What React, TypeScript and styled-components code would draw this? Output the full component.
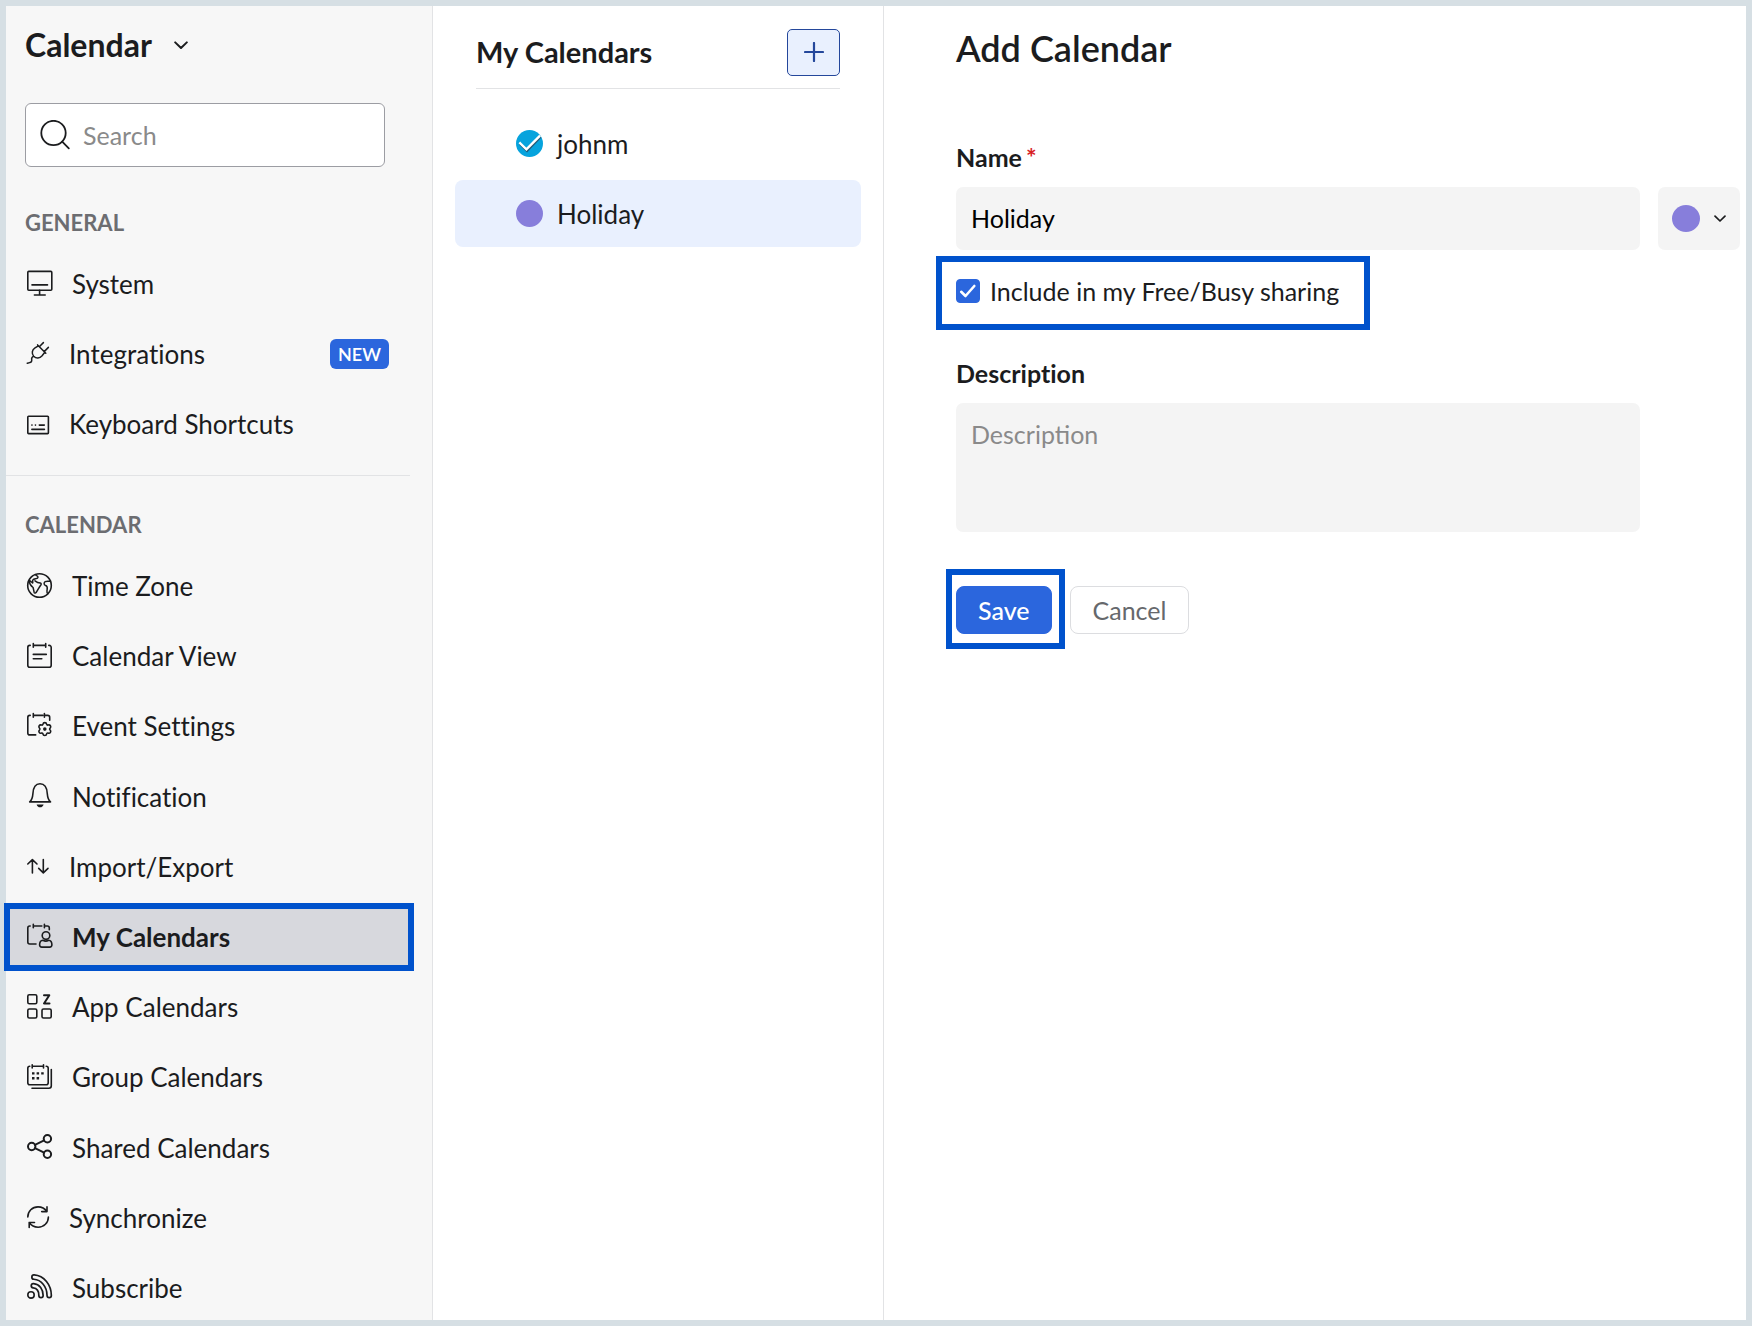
import React, { useState } from "react";
import styled, { createGlobalStyle, css } from "styled-components";

const colors = {
  frame: "#d6dfe4",
  sidebar: "#f7f7f7",
  text: "#1b1c1e",
  muted: "#6c6d71",
  placeholder: "#8a8a8a",
  line: "#e2e3e5",
  field: "#f4f4f4",
  primary: "#2b66dd",
  callout: "#0052cc",
  selected: "#e9f0fe",
  purple: "#877edb",
};

const GlobalStyle = createGlobalStyle`
  *, *::before, *::after { box-sizing: border-box; }
  body {
    margin: 0;
    background: ${colors.frame};
    color: ${colors.text};
    font-family: Lato, "Open Sans", sans-serif;
    font-size: 25px;
    line-height: 30px;
  }
  button, input, textarea { font: inherit; color: inherit; }
  h1, h2, h3, ul { margin: 0; padding: 0; }
  ul { list-style: none; }
`;

/* Frame drawn over an element to call attention to it. */
const callout = (inset: string) => css`
  position: relative;
  &::after {
    content: "";
    position: absolute;
    inset: ${inset};
    border: 6px solid ${colors.callout};
    pointer-events: none;
  }
`;

const Page = styled.div`
  display: grid;
  grid-template-columns: 427px 451px minmax(0, 1fr);
  min-height: 100vh;
  padding: 6px;
`;

const Sidebar = styled.aside`
  display: flex;
  flex-direction: column;
  padding: 18px 0 4px;
  background: ${colors.sidebar};
  border-right: 1px solid ${colors.line};
`;

const AppSwitcher = styled.button`
  display: flex;
  align-items: center;
  align-self: flex-start;
  gap: 22px;
  margin-left: 19px;
  padding: 0;
  border: 0;
  background: none;
  font-size: 32px;
  font-weight: 700;
  line-height: 42px;
`;

const SearchField = styled.label`
  display: flex;
  align-items: center;
  gap: 13px;
  height: 64px;
  margin: 37px 47px 0 19px;
  padding: 0 14px;
  background: #fff;
  border: 1px solid #9c9da3;
  border-radius: 6px;
`;

const SearchInput = styled.input`
  flex: 1;
  min-width: 0;
  padding: 0;
  border: 0;
  outline: 0;
  background: none;
  &::placeholder {
    color: ${colors.placeholder};
    opacity: 1;
  }
`;

const NavSection = styled.section<{ $fill?: boolean }>`
  display: flex;
  flex-direction: column;
  flex: ${(p) => (p.$fill ? "1" : "none")};
  padding-top: ${(p) => (p.$fill ? "36px" : "43px")};
`;

const NavDivider = styled.hr`
  flex: none;
  width: auto;
  height: 1px;
  margin: 23px 22px 0 0;
  border: 0;
  background: ${colors.line};
`;

const NavHeading = styled.h2`
  margin: 0 0 20px 19px;
  color: ${colors.muted};
  font-size: 22px;
  line-height: 26px;
  text-transform: uppercase;
`;

const NavList = styled.ul`
  display: flex;
  flex: 1;
  flex-direction: column;
  justify-content: space-between;
  gap: 14px;
  margin: 0 24px 0 4px;
`;

const NavLink = styled.a<{ $active?: boolean }>`
  display: flex;
  align-items: center;
  gap: 20px;
  height: 56px;
  padding: 0 19px 0 17px;
  color: inherit;
  font-size: 26px;
  text-decoration: none;
  font-variant-ligatures: none;
  ${(p) =>
    p.$active &&
    css`
      background: #d7d8dd;
      font-weight: 700;
      ${callout("-6px")}
    `}
`;

const NavIcon = styled.svg`
  display: block;
  flex: none;
  box-sizing: content-box;
  padding-bottom: 2px;
  overflow: visible;
  fill: none;
  stroke: currentColor;
  stroke-width: 1.6;
  stroke-linecap: round;
  stroke-linejoin: round;
`;

const Badge = styled.span`
  margin-left: auto;
  padding: 0 8px;
  border-radius: 6px;
  background: ${colors.primary};
  color: #fff;
  font-size: 18px;
  font-weight: 600;
`;

const ListPane = styled.section`
  padding: 23px 22px 0;
  background: #fff;
  border-right: 1px solid ${colors.line};
`;

const ListHeader = styled.header`
  display: flex;
  align-items: center;
  justify-content: space-between;
  margin: 0 21px;
  padding-bottom: 12px;
  border-bottom: 1px solid ${colors.line};
`;

const ListTitle = styled.h2`
  padding-bottom: 2px;
  font-size: 29px;
  line-height: 36px;
`;

const AddButton = styled.button`
  display: grid;
  place-items: center;
  width: 53px;
  height: 47px;
  padding: 0 0 2px;
  border: 1px solid #24479b;
  border-radius: 5px;
  background: ${colors.selected};
  color: #24479b;
`;

const CalendarList = styled.ul`
  display: grid;
  gap: 3px;
  margin-top: 21px;
`;

const CalendarRow = styled.li<{ $selected?: boolean }>`
  display: flex;
  align-items: center;
  height: 67px;
  padding-left: 61px;
  border-radius: 8px;
  background: ${(p) => (p.$selected ? colors.selected : "transparent")};
  font-size: 26px;
`;

const CheckLabel = styled.label<{ $gap: number }>`
  display: inline-flex;
  align-items: center;
  gap: ${(p) => p.$gap}px;
`;

const CheckStack = styled.span`
  display: grid;
  place-items: center;
  & > * {
    grid-area: 1 / 1;
  }
  & > svg {
    pointer-events: none;
  }
`;

const RoundCheck = styled.input<{ $color: string }>`
  appearance: none;
  width: 27px;
  height: 27px;
  margin: 0;
  border-radius: 50%;
  background: ${(p) => p.$color};
`;

const SquareCheck = styled.input`
  appearance: none;
  width: 24px;
  height: 24px;
  margin: 0;
  border: 1px solid ${colors.primary};
  border-radius: 4px;
  background: #fff;
  &:checked {
    background: ${colors.primary};
  }
`;

const FormPane = styled.main`
  padding: 20px 6px 0 72px;
  background: #fff;
`;

const FormTitle = styled.h1`
  margin-bottom: 72px;
  font-size: 36px;
  font-weight: 600;
  line-height: 44px;
`;

const FormGrid = styled.form`
  display: grid;
  grid-template-columns: minmax(0, 1fr) 82px;
  column-gap: 18px;
`;

const FullRow = styled.div`
  grid-column: 1 / -1;
`;

const FieldLabel = styled.label`
  display: flex;
  gap: 4px;
  grid-column: 1 / -1;
  margin-bottom: 15px;
  font-weight: 700;
  font-variant-ligatures: none;
`;

const Required = styled.span`
  color: #d8201f;
`;

const TextInput = styled.input`
  width: 100%;
  height: 63px;
  padding: 0 15px 2px;
  border: 0;
  border-radius: 7px;
  outline: 0;
  background: ${colors.field};
  color: #000;
`;

const TextArea = styled.textarea`
  display: block;
  width: 100%;
  height: 129px;
  padding: 16px 15px;
  border: 0;
  border-radius: 7px;
  outline: 0;
  resize: none;
  background: ${colors.field};
  &::placeholder {
    color: ${colors.placeholder};
    opacity: 1;
  }
`;

const ColorButton = styled.button`
  display: flex;
  align-items: center;
  gap: 14px;
  height: 63px;
  padding: 0 14px;
  border: 0;
  border-radius: 7px;
  background: ${colors.field};
`;

const Swatch = styled.span`
  width: 28px;
  height: 27px;
  border-radius: 50%;
  background: ${colors.purple};
`;

const SharingOption = styled.div`
  display: inline-block;
  height: 30px;
  margin: 26px 0 52px;
  ${callout("-20px -31px -24px -20px")}
`;

const Actions = styled.div`
  display: flex;
  gap: 18px;
  grid-column: 1 / -1;
  margin-top: 54px;
`;

const Button = styled.button`
  height: 48px;
  padding: 0 22px;
  border: 1px solid #dcdde0;
  border-radius: 8px;
  background: #fff;
  color: #66686c;
`;

const SaveButton = styled(Button)`
  padding: 0 21px;
  border-color: ${colors.primary};
  background: ${colors.primary};
  color: #fff;
  font-weight: 500;
  ${callout("-18px -14px -16px -11px")}
`;

const Chevron = ({ width }: { width: number }) => (
  <svg
    width={width}
    height={width * 0.6}
    viewBox="0 0 14 8"
    fill="none"
    stroke="currentColor"
    strokeWidth="2"
    strokeLinecap="round"
    strokeLinejoin="round"
    aria-hidden="true"
  >
    <path d="M1.2 1.2 7 6.8l5.8-5.6" />
  </svg>
);

type Glyph = { size: 22 | 25; art: React.ReactNode };

const glyphs: Record<string, Glyph> = {
  system: {
    size: 25,
    art: (
      <>
        <rect x="0.8" y="0.4" width="24" height="18.8" rx="1" />
        <path d="M5 13.900h15.500M12.600 19.200v4.600M7.400 24h10.800" />
      </>
    ),
  },
  plug: {
    size: 22,
    art: (
      <path
        strokeWidth="1.5"
        d="M10.600 2.900l8.200 8.400M16.400.6l-4.100 4.100M21.400 5.400l-4.200 4.200M11.400 3.800 8 5.900c-3.200 2-3.500 5.800-1.300 8.300 2.500 2.700 6 2.400 8.400-.4l2.700-3.500M6.300 14.400c-1.700.9-1.900 1.700-1.600 3.300.3 1.800-.6 2.800-2 2.900L.3 21.300"
      />
    ),
  },
  keyboard: {
    size: 22,
    art: (
      <>
        <rect x="0.8" y="4.2" width="20.6" height="17.4" rx="0.8" />
        <path d="M4.900 13.100h.1M8.400 13.100h.1M12.300 13.100h5M4.900 17.400h12.500" />
      </>
    ),
  },
  globe: {
    size: 25,
    art: (
      <>
        <circle cx="12.5" cy="12.5" r="11.8" />
        <path
          strokeWidth="1.5"
          d="M8.300 1.500c.6 1.300 2.700 1 2.700 2.700 0 2-3.900 1.200-5.100 2.700-.9 1.100.4 2.200-.3 3.100L2.400 7.300M2.200 8c.3 3.300 1.700 5 3.900 6.500l1 4.700c.3 1.100 1.500 1.200 2 .3 1.900-2.800 3-5.200 4.900-7.800.5-.8 0-1.500-.8-1.600-2.300-.1-3.500-.9-5.200-2.300M23.400 8c-1.900.5-3.500-.4-5.200.7-1.500 1-1.500 3.300.4 3.800 2.600.7 1.600 3.300 1.400 5.100-.1 1.200-.3 2.200.7 2.900"
        />
      </>
    ),
  },
  calendar: {
    size: 25,
    art: (
      <path d="M3.200 2.400h-.4c-1.200 0-2 .8-2 2v17.800c0 1.200.8 2 2 2h19.400c1.200 0 2-.8 2-2V4.400c0-1.200-.8-2-2-2h-.4M6.300.6v3.600M18.700.6v3.600M6.300 2.400h12.400M6.300 11.400h13M6.300 15.700h8.500" />
    ),
  },
  calendarGear: {
    size: 25,
    art: (
      <>
        <path d="M3.200 2.400h-.4c-1.200 0-2 .8-2 2v15.500c0 1.200.8 2 2 2h5.900M6.300.6v3.600M17.400.6v3.600M6.300 2.400h9.500M17.400 2.400h3.300c1.200 0 2 .8 2 2v2.800" />
        <path d="M15.900 11.300c.4-2.200 3.400-2.200 3.800 0 .2.700.6.900 1.300.7 2.100-.8 3.700 1.800 2 3.300-.5.500-.5 1 0 1.500 1.700 1.500.1 4.100-2 3.300-.7-.2-1.100 0-1.300.7-.4 2.200-3.400 2.200-3.800 0-.2-.7-.6-.9-1.300-.7-2.100.8-3.700-1.800-2-3.300.5-.5.500-1 0-1.500-1.700-1.500-.1-4.100 2-3.300.7.200 1.100 0 1.300-.7z" />
        <circle cx="17.8" cy="16.1" r="1.8" fill="currentColor" stroke="none" />
      </>
    ),
  },
  bell: {
    size: 25,
    art: (
      <>
        <path d="M2.700 18.900h20.800c-2.300-2.100-2.900-4-3.200-8.200C20 5.200 17.800.8 13 .8S6.200 5.200 5.900 10.700c-.3 4.200-.9 6.100-3.200 8.200z" />
        <path d="M9.600 21.400h7c-.5 1.900-1.800 2.800-3.500 2.800s-3-.9-3.500-2.800z" fill="currentColor" stroke="none" />
      </>
    ),
  },
  arrows: {
    size: 22,
    art: <path d="M5.400 18V4.800M.8 9l4.600-4.400L10 9M16.300 4.500v13.200M11.700 13.400l4.600 4.400 4.700-4.400" />,
  },
  calendarUser: {
    size: 25,
    art: (
      <>
        <path d="M3.200 3h-.4c-1.200 0-2 .8-2 2v14c0 1.200.8 2 2 2h6.200M6.300 1.200v3.600M17.400 1.200v3.600M6.300 3h8.500M17.400 3h2.900c1.200 0 2 .8 2 2v1.800" />
        <circle cx="19" cy="12.6" r="3.8" />
        <path d="M15.900 17.300c-2 .2-3.300 1.900-3.300 4.500 0 1.500.8 2.300 2.300 2.300h7.700c1.500 0 2.300-.8 2.300-2.300 0-2.600-1.300-4.300-3.300-4.500-2 1.100-3.700 1.100-5.700 0z" />
      </>
    ),
  },
  apps: {
    size: 25,
    art: (
      <>
        <rect x="0.8" y="0.8" width="9" height="9" rx="1.5" />
        <rect x="0.8" y="15" width="9" height="9" rx="1.5" />
        <rect x="15" y="15" width="9.2" height="9" rx="1.5" />
        <path strokeWidth="2" d="M17 1.300h5.300L17 9.500h5.500" />
      </>
    ),
  },
  group: {
    size: 25,
    art: (
      <>
        <path d="M2.800 2.300c-1.200 0-2 .8-2 2v14.400c0 1.200.8 2 2 2h16.400c1.200 0 2-.8 2-2V4.300c0-1.200-.8-2-2-2M5.200.8v3.200M16.500.8v3.200M5.200 2.300h11.300M24.300 5.600v16.200c0 1.500-.9 2.500-2.400 2.500H5" />
        <path
          strokeWidth="2.4"
          strokeLinecap="square"
          d="M6.200 9.400h.1M10.800 9.400h.1M15.400 9.400h.1M6.200 14.200h.1M10.800 14.200h.1"
        />
      </>
    ),
  },
  share: {
    size: 25,
    art: (
      <g strokeWidth="2">
        <circle cx="4.7" cy="12.5" r="3.7" />
        <circle cx="20.4" cy="4.7" r="3.7" />
        <circle cx="20.4" cy="20.3" r="3.7" />
        <path d="M8 10.900l9.100-4.500M8 14.100l9.100 4.500" />
      </g>
    ),
  },
  sync: {
    size: 22,
    art: (
      <path d="M.8 11C.8 5.200 5.300.9 11 .9c3.700 0 7 1.900 8.900 4.700M20 .9v4.700h-5.300M21.400 11c0 5.800-4.600 10.200-10.300 10.200-3.700 0-7-1.900-8.900-4.700M2.200 21.400v-4.900h5.300" />
    ),
  },
  feed: {
    size: 25,
    art: (
      <>
        <circle cx="4" cy="20.9" r="3.2" />
        <path strokeWidth="6" d="M7 3.100c8.600.6 15.200 8.600 15.200 18.400M6.400 11.700c4.700.4 7.600 4.400 7.600 9.800" />
        <path
          stroke={colors.sidebar}
          strokeWidth="2.6"
          d="M7 3.100c8.600.6 15.200 8.600 15.200 18.400M6.400 11.700c4.700.4 7.600 4.400 7.600 9.800"
        />
      </>
    ),
  },
};

type NavEntry = { label: string; icon: string; badge?: string; active?: boolean };

const generalNav: NavEntry[] = [
  { label: "System", icon: "system" },
  { label: "Integrations", icon: "plug", badge: "NEW" },
  { label: "Keyboard Shortcuts", icon: "keyboard" },
];

const calendarNav: NavEntry[] = [
  { label: "Time Zone", icon: "globe" },
  { label: "Calendar View", icon: "calendar" },
  { label: "Event Settings", icon: "calendarGear" },
  { label: "Notification", icon: "bell" },
  { label: "Import/Export", icon: "arrows" },
  { label: "My Calendars", icon: "calendarUser", active: true },
  { label: "App Calendars", icon: "apps" },
  { label: "Group Calendars", icon: "group" },
  { label: "Shared Calendars", icon: "share" },
  { label: "Synchronize", icon: "sync" },
  { label: "Subscribe", icon: "feed" },
];

const Nav = ({ entries }: { entries: NavEntry[] }) => (
  <NavList>
    {entries.map(({ label, icon, badge, active }) => {
      const { size, art } = glyphs[icon];
      return (
        <li key={label}>
          <NavLink href="#" $active={active} aria-current={active ? "page" : undefined}>
            <NavIcon width={size} height={size} viewBox={`0 0 ${size} ${size}`} aria-hidden="true">
              {art}
            </NavIcon>
            <span>{label}</span>
            {badge && <Badge>{badge}</Badge>}
          </NavLink>
        </li>
      );
    })}
  </NavList>
);

export default function App() {
  const [name, setName] = useState("Holiday");
  const [shared, setShared] = useState(true);
  const [johnm, setJohnm] = useState(true);
  const [holiday, setHoliday] = useState(false);

  return (
    <>
      <GlobalStyle />
      <Page>
        <Sidebar>
          <AppSwitcher type="button">
            Calendar
            <Chevron width={14} />
          </AppSwitcher>
          <SearchField>
            <svg
              width="30"
              height="30"
              viewBox="0 0 30 30"
              fill="none"
              stroke="currentColor"
              strokeWidth="1.8"
              strokeLinecap="round"
              aria-hidden="true"
            >
              <circle cx="13.5" cy="13" r="12.2" />
              <path d="M22.200 21.700l6.600 6.600" />
            </svg>
            <SearchInput type="text" placeholder="Search" aria-label="Search" />
          </SearchField>

          <NavSection>
            <NavHeading>General</NavHeading>
            <Nav entries={generalNav} />
          </NavSection>
          <NavDivider />
          <NavSection $fill>
            <NavHeading>Calendar</NavHeading>
            <Nav entries={calendarNav} />
          </NavSection>
        </Sidebar>

        <ListPane>
          <ListHeader>
            <ListTitle>My Calendars</ListTitle>
            <AddButton type="button" aria-label="Add calendar">
              <svg
                width="20"
                height="20"
                viewBox="0 0 20 20"
                fill="none"
                stroke="currentColor"
                strokeWidth="2.2"
                strokeLinecap="round"
                aria-hidden="true"
              >
                <path d="M10 1v18M1 10h18" />
              </svg>
            </AddButton>
          </ListHeader>
          <CalendarList>
            <CalendarRow>
              <CheckLabel $gap={14}>
                <CheckStack>
                  <RoundCheck
                    type="checkbox"
                    $color="#06a3dd"
                    checked={johnm}
                    onChange={(e) => setJohnm(e.target.checked)}
                  />
                  {johnm && (
                    <svg width="27" height="27" viewBox="0 0 27 27" fill="none" strokeLinecap="square" aria-hidden="true">
                      <path d="M4.800 14.800l6.200 6 12.600-13" stroke="#245a78" strokeWidth="2.4" />
                      <path d="M4.200 13.300l6.200 6 12.800-12.800" stroke="#fff" strokeWidth="2.4" />
                    </svg>
                  )}
                </CheckStack>
                johnm
              </CheckLabel>
            </CalendarRow>
            <CalendarRow $selected>
              <CheckLabel $gap={14}>
                <CheckStack>
                  <RoundCheck
                    type="checkbox"
                    $color={colors.purple}
                    checked={holiday}
                    onChange={(e) => setHoliday(e.target.checked)}
                  />
                </CheckStack>
                Holiday
              </CheckLabel>
            </CalendarRow>
          </CalendarList>
        </ListPane>

        <FormPane>
          <FormTitle>Add Calendar</FormTitle>
          <FormGrid onSubmit={(e) => e.preventDefault()}>
            <FieldLabel htmlFor="calendar-name">
              Name <Required>*</Required>
            </FieldLabel>
            <TextInput id="calendar-name" type="text" value={name} onChange={(e) => setName(e.target.value)} />
            <ColorButton type="button" aria-label="Calendar color">
              <Swatch />
              <Chevron width={12} />
            </ColorButton>

            <FullRow>
              <SharingOption>
                <CheckLabel $gap={10}>
                  <CheckStack>
                    <SquareCheck type="checkbox" checked={shared} onChange={(e) => setShared(e.target.checked)} />
                    {shared && (
                      <svg
                        width="24"
                        height="24"
                        viewBox="0 0 24 24"
                        fill="none"
                        stroke="#fff"
                        strokeWidth="2.6"
                        strokeLinecap="round"
                        strokeLinejoin="round"
                        aria-hidden="true"
                      >
                        <path d="M5.200 12.800l4.300 4.200 8.800-10" />
                      </svg>
                    )}
                  </CheckStack>
                  Include in my Free/Busy sharing
                </CheckLabel>
              </SharingOption>
            </FullRow>

            <FieldLabel htmlFor="calendar-description">Description</FieldLabel>
            <TextArea id="calendar-description" placeholder="Description" />

            <Actions>
              <SaveButton type="submit">Save</SaveButton>
              <Button type="button">Cancel</Button>
            </Actions>
          </FormGrid>
        </FormPane>
      </Page>
    </>
  );
}
